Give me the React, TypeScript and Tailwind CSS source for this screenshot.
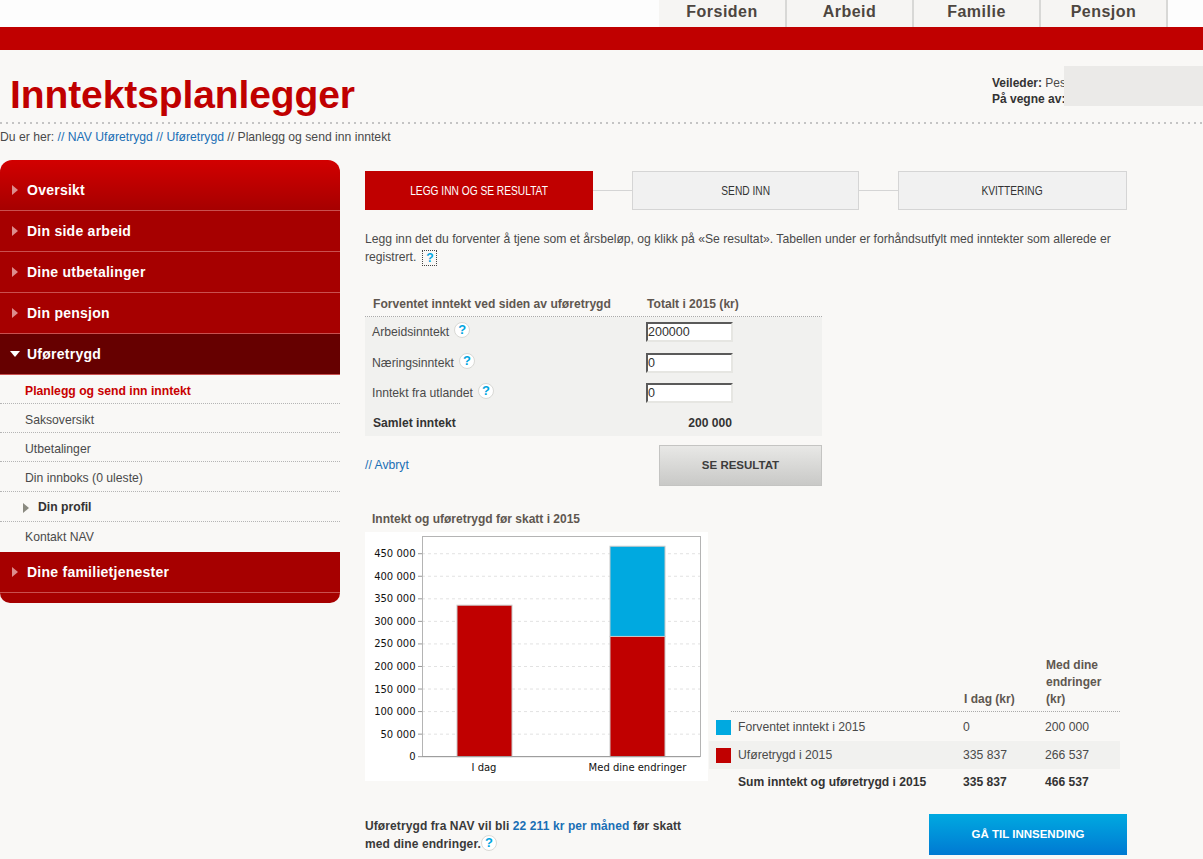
const font = "font-['Liberation_Sans',Arial,sans-serif]";

const tabs = ["Forsiden", "Arbeid", "Familie", "Pensjon"];

function Help({ className = "" }: { className?: string }) {
  return (
    <span
      className={`inline-flex items-center justify-center w-[16px] h-[16px] rounded-full bg-white border border-[#d9d9d5] text-[#00a5e0] text-[13px] leading-none font-bold ${className}`}
    >
      ?
    </span>
  );
}

function NavItem({ label, first, open }: { label: string; first?: boolean; open?: boolean }) {
  return (
    <div
      className={`flex items-center border-b border-[#c9504f] text-white text-[14px] font-bold ${
        first
          ? "h-[51px] pt-[10px] rounded-t-[12px] bg-gradient-to-b from-[#d20000] to-[#a60000]"
          : open
          ? "h-[41px] bg-[#660000]"
          : "h-[41px] bg-[#a60000]"
      }`}
    >
      {open ? (
        <span className="ml-[10px] mr-[7px] w-0 h-0 border-x-[5.5px] border-x-transparent border-t-[6px] border-t-white" />
      ) : (
        <span className="ml-[12px] mr-[9px] w-0 h-0 border-y-[5.5px] border-y-transparent border-l-[6px] border-l-[#dc8d8d]" />
      )}
      <span className="tracking-[0.25px]">{label}</span>
    </div>
  );
}

function SubItem({ label, tone = "" }: { label: string; tone?: string }) {
  return (
    <div
      className={`h-[29px] pt-[4px] pl-[25px] flex items-center text-[12.2px] border-b border-dotted border-[#b5b5b5] ${
        tone || "text-[#4a4a4a]"
      }`}
    >
      {label}
    </div>
  );
}

function Sidebar() {
  return (
    <aside className="w-[340px] shrink-0">
      <NavItem label="Oversikt" first />
      <NavItem label="Din side arbeid" />
      <NavItem label="Dine utbetalinger" />
      <NavItem label="Din pensjon" />
      <NavItem label="Uføretrygd" open />
      <SubItem label="Planlegg og send inn inntekt" tone="text-[#c80000] font-bold" />
      <SubItem label="Saksoversikt" />
      <SubItem label="Utbetalinger" />
      <div className="h-[30px] pt-[3px] pl-[25px] flex items-center text-[12.2px] text-[#4a4a4a] border-b border-dotted border-[#b5b5b5]">
        Din innboks (0 uleste)
      </div>
      <div className="h-[30px] pt-[2px] pl-[23px] flex items-center text-[12.2px] font-bold text-[#333] border-b border-dotted border-[#b5b5b5]">
        <span className="mr-[9px] w-0 h-0 border-y-[5px] border-y-transparent border-l-[6px] border-l-[#8a8a80]" />
        Din profil
      </div>
      <div className="h-[30px] pl-[25px] flex items-center text-[12.2px] text-[#4a4a4a]">Kontakt NAV</div>
      <NavItem label="Dine familietjenester" />
      <div className="h-[10px] bg-[#a60000] rounded-b-[10px]" />
    </aside>
  );
}

function StepBox({ label, active, width }: { label: string; active?: boolean; width: string }) {
  return (
    <div
      className={`${width} h-[39px] flex items-center justify-center ${
        active ? "bg-[#c00000] text-white" : "bg-[#f1f1f1] border border-[#d5d5d5] text-[#333]"
      }`}
    >
      <span className="inline-block scale-x-[0.85] whitespace-nowrap">{label}</span>
    </div>
  );
}

function Steps() {
  return (
    <div className="flex items-center text-[12px]">
      <StepBox label="LEGG INN OG SE RESULTAT" active width="w-[228px]" />
      <div className="w-[39px] h-[1px] bg-[#d5d5d5]" />
      <StepBox label="SEND INN" width="w-[227px]" />
      <div className="w-[39px] h-[1px] bg-[#d5d5d5]" />
      <StepBox label="KVITTERING" width="w-[229px]" />
    </div>
  );
}

function IncomeRow({ label, value, spaced }: { label: string; value: string; spaced?: boolean }) {
  return (
    <div className={`h-[30px] flex items-center text-[12.2px] text-[#4a4a4a] ${spaced ? "mt-[1px]" : ""}`}>
      <span className="w-[281px] pl-[7px] flex items-center">
        {label}
        <Help className="ml-[5px] -mt-[4px]" />
      </span>
      <input
        readOnly
        value={value}
        className="w-[87px] h-[20px] px-0 bg-white text-[12.5px] text-[#333] border-2 border-t-[#5a5a5a] border-l-[#5a5a5a] border-r-[#e6e6e2] border-b-[#e6e6e2] outline-none"
      />
    </div>
  );
}

function IncomeForm() {
  return (
    <div className="w-[457px] mt-[27px]">
      <div className="h-[24px] flex items-center pl-[8px] text-[12.1px] font-bold text-[#5f5750] border-b border-dotted border-[#aaa]">
        <span className="w-[274px]">Forventet inntekt ved siden av uføretrygd</span>
        <span>Totalt i 2015 (kr)</span>
      </div>
      <div className="bg-[#f1f1ef] h-[119px]">
        <IncomeRow label="Arbeidsinntekt" value="200000" />
        <IncomeRow label="Næringsinntekt" value="0" spaced />
        <IncomeRow label="Inntekt fra utlandet" value="0" />
        <div className="h-[30px] flex items-center pl-[8px] pr-[90px] justify-between text-[12.1px] font-bold text-[#333]">
          <span>Samlet inntekt</span>
          <span>200 000</span>
        </div>
      </div>
      <div className="flex items-center justify-between mt-[9px]">
        <a className="text-[12.2px] text-[#1a6fb5]">// Avbryt</a>
        <button className="w-[163px] h-[41px] bg-gradient-to-b from-[#e8e8e6] to-[#c9c9c7] border border-[#c4c4c2] text-[11.5px] font-bold text-[#3d3d3d]">
          SE RESULTAT
        </button>
      </div>
    </div>
  );
}

const ticks = [0, 50, 100, 150, 200, 250, 300, 350, 400, 450];
const yOf = (v: number) => 224.7 - v * 0.4511;

function Chart() {
  return (
    <div className="w-[343px] h-[249px] bg-white shrink-0">
      <svg width="343" height="249" className="block font-['DejaVu_Sans',sans-serif]">
        {ticks.slice(1).map((t) => (
          <line key={t} x1="57" x2="335" y1={yOf(t)} y2={yOf(t)} stroke="#e2e2e2" strokeDasharray="3 3" />
        ))}
        <rect x="57.5" y="4.5" width="278" height="220" fill="none" stroke="#b4b4b4" />
        <rect x="92" y={yOf(335.837)} width="55" height={224.7 - yOf(335.837)} fill="#c00000" stroke="#c8c8c8" />
        <rect x="245" y={yOf(466.537)} width="55" height={yOf(266.537) - yOf(466.537)} fill="#00a9e0" stroke="#c8c8c8" />
        <rect x="245" y={yOf(266.537)} width="55" height={224.7 - yOf(266.537)} fill="#c00000" stroke="#c8c8c8" />
        <line x1="57" x2="335" y1="224.7" y2="224.7" stroke="#999999" />
        {ticks.map((t) => (
          <g key={t}>
            <line x1="53" x2="57" y1={yOf(t)} y2={yOf(t)} stroke="#999999" />
            <text x="50.5" y={yOf(t) + 3.5} textAnchor="end" fontSize="10" fill="#111111">
              {t === 0 ? "0" : `${t} 000`}
            </text>
          </g>
        ))}
        <text x="119" y="239" textAnchor="middle" fontSize="10" fill="#111111">I dag</text>
        <text x="272.5" y="239" textAnchor="middle" fontSize="10" fill="#111111">Med dine endringer</text>
      </svg>
    </div>
  );
}

function ResultRow({ swatch, label, a, b, shaded }: { swatch: string; label: string; a: string; b: string; shaded?: boolean }) {
  return (
    <div className={`flex items-center h-[28px] text-[12.2px] text-[#4a4a4a] ${shaded ? "bg-[#f1f1ef]" : ""}`}>
      <span className={`ml-[7px] w-[15px] h-[15px] ${swatch}`} />
      <span className="ml-[7px] w-[225px]">{label}</span>
      <span className="w-[82px]">{a}</span>
      <span>{b}</span>
    </div>
  );
}

function ResultTable() {
  return (
    <div className="w-[411px] ml-[1px] mt-[126px]">
      <div className="ml-[22px] flex items-end h-[54px] pb-[3px] text-[12px] font-bold leading-[17px] text-[#5f5750] border-b border-dotted border-[#aaa]">
        <span className="w-[233px]" />
        <span className="w-[82px]">I dag (kr)</span>
        <span className="w-[60px]">Med dine endringer (kr)</span>
      </div>
      <div className="mt-[1px]">
        <ResultRow swatch="bg-[#00a9e0]" label="Forventet inntekt i 2015" a="0" b="200 000" />
        <ResultRow swatch="bg-[#c00000]" label="Uføretrygd i 2015" a="335 837" b="266 537" shaded />
      </div>
      <div className="flex items-center h-[26px] pl-[29px] text-[12.1px] font-bold text-[#333]">
        <span className="w-[225px]">Sum inntekt og uføretrygd i 2015</span>
        <span className="w-[82px]">335 837</span>
        <span>466 537</span>
      </div>
    </div>
  );
}

export default function App() {
  return (
    <div className={`w-[1203px] h-[859px] overflow-hidden relative bg-[#f9f8f6] ${font}`}>
      <div className="h-[27px] bg-[#fdfdfd] flex justify-end pr-[35px]">
        {tabs.map((t, i) => (
          <div
            key={t}
            className={`${i === 0 ? "w-[128px]" : "w-[127px]"} pb-[4px] bg-[#f6f5f3] border-r-2 border-[#d8d8d6] flex items-center justify-center text-[16px] font-bold tracking-[0.5px] text-[#4d4640]`}
          >
            {t}
          </div>
        ))}
      </div>
      <div className="h-[23px] bg-[#c00000]" />

      <div className="h-[72px] flex justify-between relative">
        <h1 className="pl-[10px] pt-[21px] text-[39px] leading-[48px] font-bold text-[#c00000] tracking-[-0.1px]">
          Inntektsplanlegger
        </h1>
        <div className="absolute left-[992px] top-[25px] text-[12px] leading-[16px] text-[#4a4a4a] whitespace-nowrap">
          <div><b className="text-[#333]">Veileder:</b> Pes</div>
          <div><b className="text-[#333]">På vegne av:</b></div>
        </div>
        <div className="absolute left-[1064px] top-[16px] w-[139px] h-[40px] bg-[#ebeae8]" />
      </div>
      <div className="h-[2px] bg-[linear-gradient(to_right,#c4c4c4_2px,transparent_2px)] bg-[length:6px_2px]" />
      <div className="h-[36px] pt-[5px] text-[12.2px] leading-[16px] text-[#4a4a4a]">
        Du er her: <a className="text-[#1a6fb5]">// NAV Uføretrygd // Uføretrygd</a> // Planlegg og send inn inntekt
      </div>

      <div className="flex">
        <Sidebar />
        <main className="ml-[25px] pt-[11px] w-[762px]">
          <Steps />
          <p className="mt-[20px] text-[12.17px] leading-[18px] text-[#4a4a4a] w-[750px]">
            Legg inn det du forventer å tjene som et årsbeløp, og klikk på «Se resultat». Tabellen under er forhåndsutfylt med inntekter som allerede er registrert.
            <span className="inline-flex ml-[6px] w-[15px] h-[16px] items-center justify-center border border-dotted border-[#444] text-[#00a5e0] font-bold leading-none align-middle">?</span>
          </p>
          <IncomeForm />
          <h3 className="mt-[25px] pl-[7px] text-[12px] leading-[16px] font-bold text-[#5f5750]">
            Inntekt og uføretrygd før skatt i 2015
          </h3>
          <div className="flex items-start mt-[5px]">
            <Chart />
            <ResultTable />
          </div>
          <div className="flex justify-between items-start mt-[19px]">
            <p className="pt-[3px] text-[12px] leading-[18px] font-bold text-[#3a3a3a] w-[340px] tracking-[0.1px]">
              Uføretrygd fra NAV vil bli <span className="text-[#1a6fb5]">22 211 kr per måned</span> før skatt med dine endringer.
              <Help className="-mt-[4px] align-middle" />
            </p>
            <button className="w-[198px] h-[41px] bg-gradient-to-b from-[#00a9e0] to-[#0079d2] text-white text-[11.5px] font-bold">
              GÅ TIL INNSENDING
            </button>
          </div>
        </main>
      </div>
    </div>
  );
}
